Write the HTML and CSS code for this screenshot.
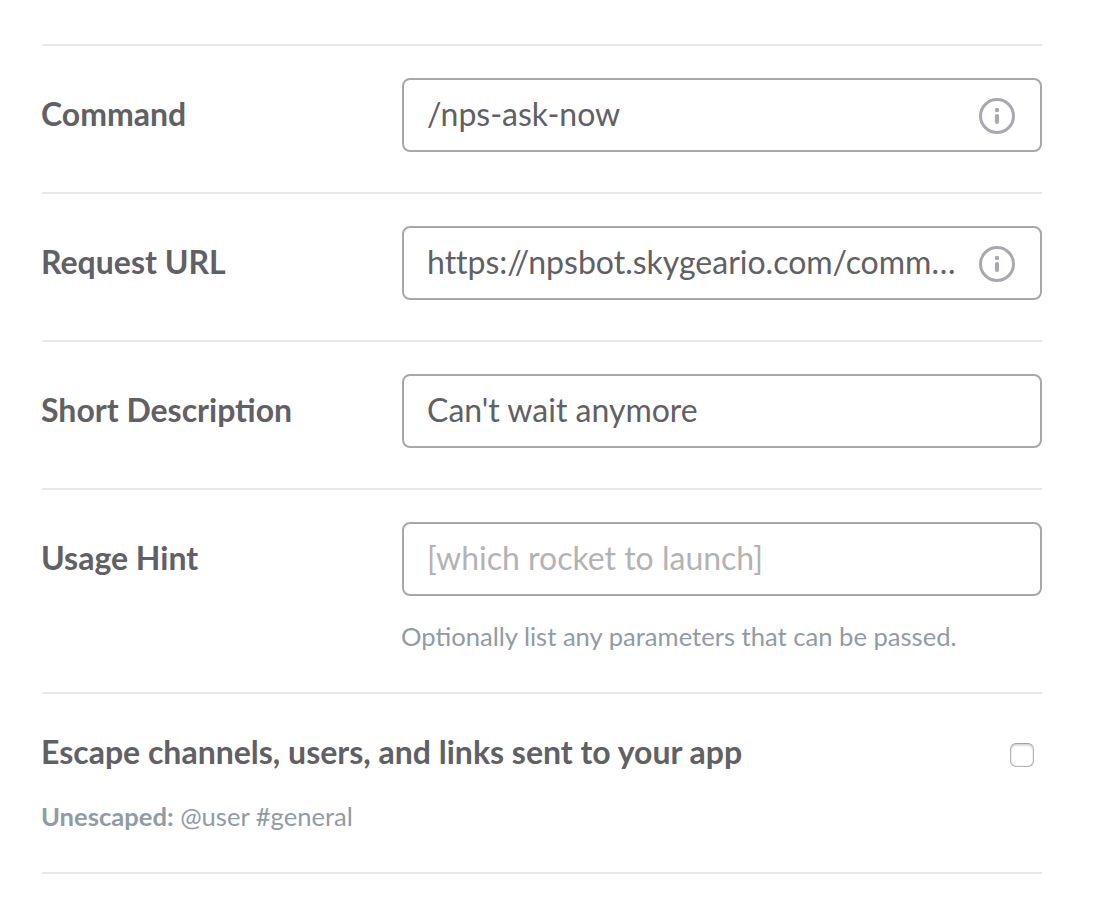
FILE: index.html
```html
<!DOCTYPE html>
<html lang="en">
<head>
<meta charset="utf-8">
<title>Slash command</title>
<link rel="stylesheet" href="styles.css">
</head>
<body>
<form class="form">
  <div class="row">
    <label class="label">Command</label>
    <div class="field"><span class="value">/nps-ask-now</span>
      <svg class="info" viewBox="0 0 36 36"><circle cx="18" cy="18" r="16.5"/><path d="M18 18v6"/><circle class="dot" cx="18" cy="12" r="2.2"/></svg></div>
  </div>
  <div class="row">
    <label class="label">Request URL</label>
    <div class="field"><span class="value">https://npsbot.skygeario.com/comm…</span>
      <svg class="info" viewBox="0 0 36 36"><circle cx="18" cy="18" r="16.5"/><path d="M18 18v6"/><circle class="dot" cx="18" cy="12" r="2.2"/></svg></div>
  </div>
  <div class="row">
    <label class="label">Short Description</label>
    <div class="field"><span class="value">Can't wait anymore</span></div>
  </div>
  <div class="row row-hint">
    <label class="label">Usage Hint</label>
    <div class="control">
      <div class="field"><span class="value placeholder">[which rocket to launch]</span></div>
      <p class="hint">Optionally list any parameters that can be passed.</p>
    </div>
  </div>
  <div class="escape">
    <div class="escape-head"><span class="title">Escape channels, users, and links sent to your app</span><span class="checkbox"></span></div>
    <p class="example"><b>Unescaped:</b> @user #general</p>
  </div>
</form>
</body>
</html>
```

FILE: styles.css
```css
* { box-sizing: border-box; }
body { margin: 0; background: #fff; color: #606065; font-family: Lato, "Liberation Sans", sans-serif; -webkit-font-smoothing: antialiased; }
.form { width: 1000px; margin: 44px 0 0 42px; }
.row { display: flex; height: 148px; padding-top: 32px; border-top: 2px solid #e8e8e8; }
.row-hint { height: 204px; }
.label { width: 360px; flex: none; line-height: 72px; font-size: 32px; font-weight: 700; margin-left: -1px; margin-right: 1px; white-space: nowrap; }
.field { display: flex; align-items: center; justify-content: space-between; width: 640px; height: 74px; padding: 0 25px 0 23px; border: 2px solid #a8a8a8; border-radius: 8px; background: #fff; }
.value { padding-bottom: 2px; font-size: 32px; line-height: 40px; white-space: nowrap; font-variant-ligatures: none; }
.placeholder { color: #b3b3b3; }
.info { width: 36px; height: 36px; margin-top: 2px; flex: none; fill: none; stroke: #a8a8b0; stroke-width: 3; }
.info path { stroke-width: 4.2; stroke-linecap: round; }
.info .dot { fill: #a8a8b0; stroke: none; }
.hint { margin: 24px 0 0 -1px; font-size: 25.6px; line-height: 32px; color: #919ba5; white-space: nowrap; }
.escape { height: 182px; padding-top: 38px; border-top: 2px solid #e8e8e8; border-bottom: 2px solid #e8e8e8; }
.escape-head { display: flex; align-items: center; justify-content: space-between; height: 40px; margin-left: -1px; padding-right: 8px; }
.title { font-size: 32px; line-height: 40px; font-weight: 700; white-space: nowrap; }
.checkbox { width: 24px; height: 24px; margin-top: 5px; border: 1px solid #b4b4b4; border-top-color: #a2a2a2; border-radius: 6px; box-shadow: inset 0 0 1px #aaa, inset 0 2px 2px #ddd; }
.example { margin: 28px 0 0 -1px; font-size: 25.6px; line-height: 32px; color: #919ba5; }
```
